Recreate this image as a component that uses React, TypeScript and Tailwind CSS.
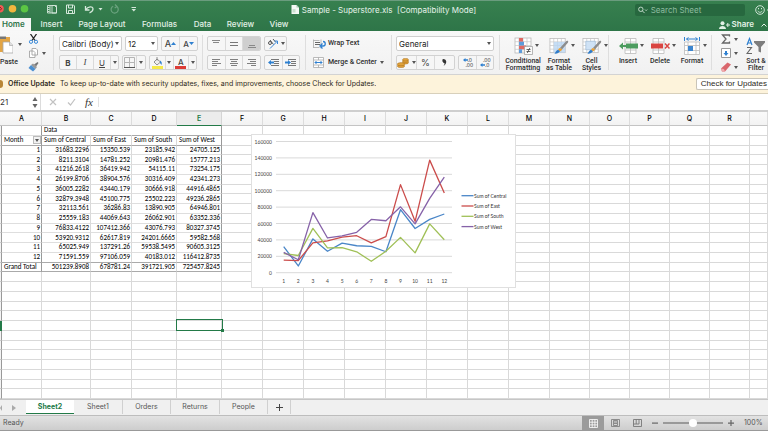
import React from 'react';

const months = [
  ['1', '31683.2296', '15350.539', '23185.942', '24705.125'],
  ['2', '8211.3104', '14781.252', '20981.476', '15777.213'],
  ['3', '41216.2618', '36419.942', '54115.11', '73254.175'],
  ['4', '26199.8706', '38904.576', '30316.409', '42341.273'],
  ['5', '36005.2282', '43440.179', '30666.918', '44916.4865'],
  ['6', '32879.3948', '45100.775', '25502.223', '49236.2865'],
  ['7', '32113.561', '36286.83', '13890.905', '64946.801'],
  ['8', '25559.183', '44069.643', '26062.901', '63352.336'],
  ['9', '76833.4122', '107412.366', '43076.793', '80327.3745'],
  ['10', '53920.9312', '62617.819', '24201.6665', '59582.568'],
  ['11', '65025.949', '137291.26', '59538.5495', '90605.3125'],
  ['12', '71591.559', '97106.059', '40183.012', '116412.8735'],
];
const sheet: string[][] = [
  ['', 'Data', '', '', ''],
  ['Month', 'Sum of Central', 'Sum of East', 'Sum of South', 'Sum of West'],
  ...months,
  ['Grand Total', '501239.8908', '678781.24', '391721.905', '725457.8245'],
];
const columns = 'ABCDEFGHIJKLMNOPQRS'.split('');
const columnWidths = [
  'w-[40px]', 'w-[49px]', 'w-[41px]', 'w-[45px]', 'w-[45px]', 'w-[41px]',
  'w-[41px]', 'w-[41px]', 'w-[41px]', 'w-[41px]', 'w-[41px]', 'w-[41px]', 'w-[41px]',
  'w-[40px]', 'w-[40px]', 'w-[40px]', 'w-[40px]', 'w-[40px]', '',
];
const series = [
  { name: 'Sum of Central', color: '#4a86c8' },
  { name: 'Sum of East', color: '#cb4c4b' },
  { name: 'Sum of South', color: '#a0c057' },
  { name: 'Sum of West', color: '#8662a8' },
];

function Caret() {
  return (
    <svg className="h-[3px] w-1 shrink-0" viewBox="0 0 4 3" aria-hidden="true">
      <path d="M0 0h4L2 3z" fill="#555" />
    </svg>
  );
}

function Separator() {
  return <div className="my-1 w-px shrink-0 bg-[#dedede]" />;
}

function Box({ children, className = '' }: { children: React.ReactNode; className?: string }) {
  return (
    <div className={`flex h-[15px] shrink-0 items-stretch divide-x divide-[#dadada] overflow-hidden rounded-[2px] border border-[#d2d2d2] bg-[#f6f6f6] ${className}`}>
      {children}
    </div>
  );
}

function Btn({ label, children, className = '' }: { label: string; children: React.ReactNode; className?: string }) {
  return (
    <button type="button" aria-label={label} className={`flex flex-1 items-center justify-center ${className}`}>
      {children}
    </button>
  );
}

function Picker({ label, value, className }: { label: string; value: string; className: string }) {
  return (
    <div className={`relative h-[15px] shrink-0 ${className}`}>
      <select aria-label={label} defaultValue={value} className="block h-[15px] w-full appearance-none rounded-[2px] border border-[#cfcfcf] bg-white pl-0.5 text-[8px] leading-[12px] text-[#222]">
        <option>{value}</option>
      </select>
      <span className="pointer-events-none absolute inset-y-0.5 right-0.5 flex w-1.5 items-center justify-center">
        <Caret />
      </span>
    </div>
  );
}

function Lines({ rows }: { rows: [number, number][] }) {
  return (
    <svg className="h-[9px] w-[10px]" viewBox="0 0 10 9" aria-hidden="true">
      {rows.map(([x, w], i) => (
        <rect key={i} x={x} y={i * 2 + 1} width={w} height="1" fill="#808080" />
      ))}
    </svg>
  );
}

function BigButton({ lines, children, className }: { lines: string[]; children: React.ReactNode; className: string }) {
  return (
    <button type="button" className={`flex shrink-0 flex-col items-center gap-[3px] pt-[5px] font-['Roboto',sans-serif] text-[7px] leading-[7px] font-medium text-[#2e2e2e] ${className}`}>
      <span className="flex h-[19px] items-center gap-0.5 pl-1.5">
        {children}
        <Caret />
      </span>
      <span className="flex flex-col whitespace-nowrap">
        {lines.map((l) => <span key={l}>{l}</span>)}
      </span>
    </button>
  );
}

function GridArt() {
  return (
    <g>
      <rect x="1" y="1" width="16" height="15" fill="#fff" stroke="#b9b9b9" strokeWidth=".8" />
      <path d="M1 4.7h16M1 8.5h16M1 12.3h16M5 1v15M9 1v15M13 1v15" stroke="#c4c4c4" strokeWidth=".7" />
    </g>
  );
}

function BrushArt() {
  return (
    <g>
      <path d="M19.5 3.5c.9.4.8 1.3.3 2l-6 7-2.300-1.500 6.200-6.800c.6-.7 1.200-1 1.800-.7z" fill="#8d8d8d" />
      <path d="M11.500 11l2.300 1.500c-.2 1-1.100 2-2.300 2.200l-2-1.500c.2-1 1-1.900 2-2.200z" fill="#e8a23b" />
      <path d="M9.500 13l2 1.600c-1.300 2.200-3.300 2.700-6 2.400 1.600-.8 1.700-3.300 4-4z" fill="#2f7cc9" />
    </g>
  );
}

function TitleBar() {
  return (
    <header className="shrink-0 border-t border-[#6a9c7e] bg-gradient-to-b from-[#37804f] to-[#2e7548] text-white">
      <div className="flex h-[17px] items-center">
        <svg className="h-[17px] w-[140px] shrink-0" viewBox="0 0 140 17" fill="none" stroke="#d5e8db" aria-hidden="true">
          <g stroke="none">
            <circle cx="0" cy="7.700" r="3.800" fill="#f25b55" />
            <circle cx="12.500" cy="7.700" r="3.800" fill="#f3b63e" />
            <circle cx="24.500" cy="7.700" r="3.800" fill="#5bc544" />
          </g>
          <path d="M0 6l1.600 1.700L0 9.500" stroke="#82201d" />
          <path d="M47.500 4.500h9v7.500h-9zM50 4.500V12M52 4.500h2.500l2 2V12H52zM48 6.500h1.500M48 8.500h1.500M48 10.500h1.500" strokeWidth=".9" />
          <path d="M66.500 4h7l1 1v7.500h-8zM68.500 4v3h4V4M68.500 12.500V9.500h4v3" strokeWidth="1" />
          <path d="M85.500 5v4h4M85.800 8.700c2-3.200 7.200-4 7.200-.7 0 1.700-1.500 3-3.500 3.800" strokeWidth="1.300" />
          <path d="M98.500 7h4l-2 2.600z" fill="#d5e8db" stroke="none" />
          <path d="M113.200 5.200a3.600 3.600 0 1 0 3.600.4M115 3.500l2 2-2.300 1.600" stroke="#6aa27e" strokeWidth="1.200" />
          <path d="M131.500 6h4.500v1h-4.500zM131.500 8h4.500l-2.200 2.600z" fill="#d5e8db" stroke="none" />
        </svg>
        <div className="flex flex-1 items-center justify-center gap-[3px] pr-2 text-[8px] leading-[10px] whitespace-pre text-[#e6f3ea]">
          <svg className="h-[9px] w-[8px]" viewBox="0 0 8 9" aria-hidden="true">
            <path d="M.5 0h5L8 2.500V9H.5z" fill="#f5f8f5" />
            <path d="M5.500 0L8 2.500H5.500z" fill="#a7c9b3" />
            <path d="M1.500 4h3v3.500h-3z" fill="#c8dfcf" />
          </svg>
          <span>{'Sample - Superstore.xls  [Compatibility Mode]'}</span>
        </div>
        <label className="flex h-[12px] w-[110px] shrink-0 items-center gap-[3px] rounded-[2px] bg-[#27683f] pl-[3px]">
          <svg className="h-[8px] w-[11px]" viewBox="0 0 11 8" fill="none" stroke="#cfe4d6" aria-hidden="true">
            <circle cx="3.200" cy="3.200" r="2.500" />
            <path d="M5 5l2.500 2.500M8 3.500l1.200 1.200 1.200-1.200" />
          </svg>
          <input aria-label="Search Sheet" placeholder="Search Sheet" className="w-full min-w-0 bg-transparent text-[8px] leading-[10px] placeholder:text-[#8fbda0]" />
        </label>
        <button type="button" aria-label="Feedback" className="ml-[10px] w-[13px] shrink-0">
          <svg className="h-[10px] w-[13px]" viewBox="0 0 13 10" fill="none" stroke="#cfe4d6" aria-hidden="true">
            <circle cx="5" cy="5" r="4.300" />
            <path d="M2.800 5.800c.8 2 3.600 2 4.400 0M3.500 3v1.300M6.500 3v1.300M12 5h1" />
          </svg>
        </button>
      </div>
      <nav className="flex h-[13px] items-stretch text-[8px] leading-[13px] font-medium text-[#e2f0e6]">
        <a href="#home" className="w-[31px] bg-[#f7f7f7] pl-0.5 font-semibold text-[#2f7549]">Home</a>
        <a href="#insert" className="w-[41px] text-center">Insert</a>
        <a href="#layout" className="w-[60px] text-center">Page Layout</a>
        <a href="#formulas" className="w-[55px] text-center">Formulas</a>
        <a href="#data" className="w-[31px] text-center">Data</a>
        <a href="#review" className="w-[45px] text-center">Review</a>
        <a href="#view" className="w-[32px] text-center">View</a>
        <button type="button" className="ml-auto flex items-center gap-0.5 font-semibold">
          <svg className="h-[8px] w-[11px]" viewBox="0 0 11 8" fill="#e2f0e6" aria-hidden="true">
            <circle cx="3.500" cy="2.200" r="2" />
            <path d="M0 8c0-4 7-4 7 0zM8.300 2h1v1.500H11v1H9.300V6h-1V4.500H7v-1h1.300z" />
          </svg>
          Share
        </button>
        <button type="button" aria-label="Collapse ribbon" className="ml-[7px] w-[7px]">
          <svg className="h-[4px] w-[6px]" viewBox="0 0 6 4" fill="none" stroke="#e2f0e6" aria-hidden="true"><path d="M.5 3.500L3 1l2.500 2.500" /></svg>
        </button>
      </nav>
    </header>
  );
}

function Ribbon() {
  return (
    <div className="flex h-[44px] shrink-0 overflow-hidden border-b border-[#d3d3d3] bg-gradient-to-b from-[#f8f8f8] to-[#f1f1f1]">
      <div className="flex w-[53px] shrink-0">
        <button type="button" className="flex w-[28px] shrink-0 flex-col items-start gap-[3px] pt-[3px] font-['Roboto',sans-serif] text-[7px] leading-[8px] font-medium text-[#2e2e2e]">
          <span className="flex h-[21px] items-center gap-[5px]">
            <svg className="h-[19px] w-[13px]" viewBox="0 0 13 19" aria-hidden="true">
              <path d="M0 2h10v15H0z" fill="#e3a545" />
              <path d="M0 1.500h6V4H0z" fill="#777" />
              <path d="M3 7h6.500L13 10.500V18H3z" fill="#fff" stroke="#aaa" strokeWidth=".8" />
              <path d="M9.500 7v3.500H13" fill="#ddd" stroke="#aaa" strokeWidth=".7" />
            </svg>
            <Caret />
          </span>
          Paste
        </button>
        <div className="flex flex-col gap-1 pt-[3px]">
          <button type="button" aria-label="Cut" className="flex">
            <svg className="h-[10px] w-[11px]" viewBox="0 0 11 10" fill="none" aria-hidden="true">
              <path d="M2.500 0l4.500 6.500M8.500 0L4 6.500" stroke="#222" strokeWidth="1.300" />
              <circle cx="3" cy="7.800" r="1.600" stroke="#3a8bdb" />
              <circle cx="8" cy="7.800" r="1.600" stroke="#3a8bdb" />
            </svg>
          </button>
          <button type="button" aria-label="Copy" className="flex items-center gap-[3px]">
            <svg className="h-[10px] w-[11px]" viewBox="0 0 11 10" fill="#fff" stroke="#9a9a9a" strokeWidth=".8" aria-hidden="true">
              <path d="M4 .5h4l1.500 1.500v5H4zM1.500 3h4L7 4.500v5H1.500z" />
            </svg>
            <Caret />
          </button>
          <button type="button" aria-label="Format Painter" className="flex">
            <svg className="h-[10px] w-[11px]" viewBox="0 0 11 10" aria-hidden="true">
              <path d="M10.500 1L9.500 0 6 2.500l2 2z" fill="#777" />
              <path d="M3 3l2-1.500L9 5 7.500 7z" fill="#999" />
              <path d="M3 3L.5 6 5 9.500 7.500 7z" fill="#4b8fd0" />
            </svg>
          </button>
        </div>
      </div>
      <Separator />
      <div className="flex w-[148px] shrink-0 flex-col gap-1 pt-[5px] pl-[5px]">
        <div className="flex gap-[3px]">
          <Picker label="Font" value="Calibri (Body)" className="w-[63px]" />
          <Picker label="Font size" value="12" className="w-[33px]" />
          <Box className="w-[37px] text-[9px] font-medium text-[#444]">
            <Btn label="Increase font size">A<svg className="h-[3px] w-[5px]" viewBox="0 0 5 3"><path d="M0 3h5L2.500 0z" fill="#2f80d0" /></svg></Btn>
            <Btn label="Decrease font size" className="text-[8px]">A<svg className="h-[3px] w-[5px]" viewBox="0 0 5 3"><path d="M0 0h5L2.500 3z" fill="#2f80d0" /></svg></Btn>
          </Box>
        </div>
        <div className="flex gap-[3px] text-[8px] text-[#444]">
          <Box className="w-[60px]">
            <Btn label="Bold" className="font-bold">B</Btn>
            <Btn label="Italic" className="font-['Liberation_Serif',serif] text-[9px] italic">I</Btn>
            <Btn label="Underline" className="underline">U</Btn>
            <button type="button" aria-label="Underline options" className="flex w-[7px] items-center justify-center"><Caret /></button>
          </Box>
          <Box className="w-[24px]">
            <Btn label="Borders">
              <svg className="h-[11px] w-[11px]" viewBox="0 0 11 11" fill="none" stroke="#b5b5b5"><path d="M.5.500h10v10H.5zM5.500.500v10M.5 5.500h10" /><path d="M0 10.500h11" stroke="#555" /></svg>
            </Btn>
            <button type="button" aria-label="Border options" className="flex w-[8px] items-center justify-center"><Caret /></button>
          </Box>
          <Box className="w-[48px]">
            <Btn label="Fill color">
              <svg className="h-[12px] w-[11px]" viewBox="0 0 11 12">
                <path d="M2 5l3-3 3.500 3-3.500 3z" fill="#eee" stroke="#777" strokeWidth=".8" />
                <path d="M5 0v3.500" stroke="#777" strokeWidth=".8" />
                <path d="M8 3.500c2 1 2 3 1.500 4.500L8 6z" fill="#3182ce" />
                <path d="M0 9h11v3H0z" fill="#f5e94a" />
              </svg>
            </Btn>
            <button type="button" aria-label="Fill options" className="flex w-[8px] items-center justify-center"><Caret /></button>
            <Btn label="Font color" className="flex-col font-medium">
              <span className="h-[9px] leading-[10px]">A</span>
              <span className="h-[3px] w-[11px] bg-[#dc3c37]" />
            </Btn>
            <button type="button" aria-label="Font color options" className="flex w-[7px] items-center justify-center"><Caret /></button>
          </Box>
        </div>
      </div>
      <Separator />
      <div className="flex w-[102px] shrink-0 flex-col gap-1 pt-[5px] pl-1">
        <div className="flex gap-[3px]">
          <Box className="w-[54px]">
            <Btn label="Top align"><svg className="h-[10px] w-[8px]" viewBox="0 0 8 10" fill="#888"><path d="M0 1h8v1H0zM1 3h6v1H1z" /></svg></Btn>
            <Btn label="Middle align"><svg className="h-[10px] w-[8px]" viewBox="0 0 8 10" fill="#777"><path d="M0 3h8v1H0zM0 6h8v1H0z" /></svg></Btn>
            <Btn label="Bottom align" className="bg-[#cfcfcf]"><svg className="h-[10px] w-[8px]" viewBox="0 0 8 10" fill="#888"><path d="M1 6h6v1H1zM0 8h8v1H0z" /></svg></Btn>
          </Box>
          <Box className="w-[23px]">
            <Btn label="Orientation" className="gap-0.5">
              <svg className="h-[11px] w-[12px]" viewBox="0 0 12 11" fill="none" stroke="#555">
                <circle cx="3" cy="5" r="1.500" /><path d="M3 2l3.500 4.500M6 1l2.500 3" />
                <path d="M3 10.500l7-7M10.500 6V3H7.500" stroke="#3a88d8" />
              </svg>
              <Caret />
            </Btn>
          </Box>
        </div>
        <div className="flex gap-[3px]">
          <Box className="w-[54px]">
            <Btn label="Align left"><Lines rows={[[1, 8], [1, 6], [1, 9], [1, 5]]} /></Btn>
            <Btn label="Center"><Lines rows={[[1, 8], [2, 6], [1, 8], [2, 6]]} /></Btn>
            <Btn label="Align right"><Lines rows={[[1, 8], [3, 6], [0, 9], [4, 5]]} /></Btn>
          </Box>
          <Box className="w-[36px]">
            <Btn label="Decrease indent">
              <svg className="h-[9px] w-[11px]" viewBox="0 0 11 9"><path d="M3 1h8v1H3zM6 3h5v1H6zM6 5h5v1H6zM3 7h8v1H3z" fill="#777" /><path d="M0 4.500L3 2v1.500h3v2H3V7z" fill="#2f80d0" /></svg>
            </Btn>
            <Btn label="Increase indent">
              <svg className="h-[9px] w-[11px]" viewBox="0 0 11 9"><path d="M3 1h8v1H3zM6 3h5v1H6zM6 5h5v1H6zM3 7h8v1H3z" fill="#777" /><path d="M6 4.500L3 2v1.500H0v2h3V7z" fill="#2f80d0" /></svg>
            </Btn>
          </Box>
        </div>
      </div>
      <Separator />
      <div className="flex w-[85px] shrink-0 flex-col gap-1 pt-[5px] pl-[7px] font-['Roboto',sans-serif] text-[7px] font-medium whitespace-nowrap text-[#2e2e2e]">
        <button type="button" className="flex h-[15px] items-center gap-0.5">
          <svg className="h-[10px] w-[13px]" viewBox="0 0 13 10" fill="none" aria-hidden="true">
            <path d="M.5.500v8.500M8 .500v9M.5 1.500h6M.5 8.500h6" stroke="#aaa" strokeWidth=".8" />
            <path d="M2 3.500h5M2 5.500h5" stroke="#666" />
            <path d="M10 2.500c3 0 3 4.500 0 4.500H8M9.500 4.500L7 7l2.500 2.500" stroke="#2f80d0" strokeWidth="1.300" />
          </svg>
          Wrap Text
        </button>
        <button type="button" className="flex h-[15px] items-center gap-[3px]">
          <svg className="h-[11px] w-[12px]" viewBox="0 0 12 11" fill="#fff" aria-hidden="true">
            <path d="M.5.500h10v10H.5zM.5 3h10M.5 8h10M5.500.500V3M5.500 8v2.500" stroke="#aaa" strokeWidth=".8" />
            <path d="M2 5.500h7M3.500 4L2 5.500 3.500 7M7.500 4L9 5.500 7.500 7" stroke="#2f80d0" fill="none" />
          </svg>
          Merge &amp; Center
          <Caret />
        </button>
      </div>
      <Separator />
      <div className="flex w-[107px] shrink-0 flex-col gap-1 pt-[5px] pl-1">
        <Picker label="Number format" value="General" className="w-[98px]" />
        <div className="flex gap-[3px]">
          <Box className="w-[59px] text-[9px] text-[#444]">
            <Btn label="Currency" className="gap-[3px]">
              <svg className="h-[10px] w-[12px]" viewBox="0 0 12 10" fill="#e1a33b" stroke="#a66d1d" strokeWidth=".5"><ellipse cx="8.500" cy="4.500" rx="3" ry="1.500" /><ellipse cx="8.500" cy="3" rx="3" ry="1.500" /><ellipse cx="8.500" cy="1.700" rx="3" ry="1.300" /><ellipse cx="4" cy="8" rx="3.700" ry="1.600" /><ellipse cx="4" cy="6.200" rx="3.700" ry="1.600" /></svg>
              <Caret />
            </Btn>
            <button type="button" className="w-[18px]">%</button>
            <Btn label="Comma style"><svg className="h-[7px] w-[5px]" viewBox="0 0 5 7"><path d="M1 0c4 0 4.500 4.500.5 7 1-1.500 1.200-2.500.8-3C0 4 0 .500 1 0z" fill="#333" /></svg></Btn>
          </Box>
          <Box className="w-[36px] text-[5px] leading-[5px] text-[#333]">
            <Btn label="Increase decimal" className="flex-col">
              <span className="flex items-center"><svg className="h-[4px] w-[5px]" viewBox="0 0 5 4"><path d="M0 2l2.500-2v1.200H5v1.600H2.500V4z" fill="#2f80d0" /></svg>.0</span>
              <span className="pl-1">.00</span>
            </Btn>
            <Btn label="Decrease decimal" className="flex-col">
              <span className="pl-1">.00</span>
              <span className="flex items-center"><svg className="h-[4px] w-[5px]" viewBox="0 0 5 4"><path d="M0 2l2.500-2v1.200H5v1.600H2.500V4z" fill="#2f80d0" /></svg>.0</span>
            </Btn>
          </Box>
        </div>
      </div>
      <Separator />
      <div className="flex w-[108px] shrink-0 gap-[1px] pl-1">
        <BigButton lines={['Conditional', 'Formatting']} className="w-[38px]">
          <svg className="h-[18px] w-[19px]" viewBox="0 0 19 18">
            <GridArt />
            <path d="M5 1h4v3.700H5zM5 8.500h7v3.800H5z" fill="#df6962" /><path d="M5 4.700h5v3.800H5zM5 12.300h3V16H5z" fill="#5c9bdb" />
            <path d="M10.500 9.500h8v8h-8z" fill="#fafafa" stroke="#999" strokeWidth=".7" />
            <path d="M12.500 12.500h4M12.500 14.500h4M15.800 11l-2.500 5" stroke="#444" strokeWidth=".8" />
          </svg>
        </BigButton>
        <BigButton lines={['Format', 'as Table']} className="w-[32px]">
          <svg className="h-[18px] w-[20px]" viewBox="0 0 21 18"><GridArt /><path d="M5 4.700h12V16H5z" fill="#b9d6f2" opacity=".8" /><BrushArt /></svg>
        </BigButton>
        <BigButton lines={['Cell', 'Styles']} className="w-[31px]">
          <svg className="h-[18px] w-[20px]" viewBox="0 0 21 18"><GridArt /><path d="M4 4h10v9H4z" fill="#cfe2f5" stroke="#9bb9d6" strokeWidth=".7" /><BrushArt /></svg>
        </BigButton>
      </div>
      <Separator />
      <div className="flex w-[102px] shrink-0 pl-[3px]">
        <BigButton lines={['Insert']} className="w-[32px]">
          <svg className="h-[18px] w-[19px]" viewBox="0 0 19 18"><path d="M6 1.500h11v15H6zM6 5h11M6 13h11M11.500 1.500v15" fill="#fff" stroke="#bbb" strokeWidth=".8" /><path d="M0 9l4-3.500V8h3V6.500h12v5H7V10H4v2.500z" fill="#4c9c5f" /></svg>
        </BigButton>
        <BigButton lines={['Delete']} className="w-[32px]">
          <svg className="h-[18px] w-[19px]" viewBox="0 0 19 18"><path d="M2 1.500h11v15H2zM2 5h11M2 13h11M7.500 1.500v15" fill="#fff" stroke="#bbb" strokeWidth=".8" /><path d="M0 6.500h12v5H0z" fill="#d94541" /><path d="M14 6.500l4.500 5M18.500 6.500l-4.500 5" stroke="#d94541" strokeWidth="1.500" /></svg>
        </BigButton>
        <BigButton lines={['Format']} className="w-[32px]">
          <svg className="h-[18px] w-[18px]" viewBox="0 0 18 18"><path d="M1.500 5h15v12.500h-15zM1.500 8.500h15M1.500 13.500h15M5 5v12.500M13 5v12.500" fill="#fff" stroke="#bbb" strokeWidth=".8" /><path d="M5 9h5v5H5z" fill="#3b85cf" /><path d="M1.500 0v4M16.500 0v4M3.500 2h11M5.500.500L3.500 2l2 1.500M12.500.500l2 1.500-2 1.500" fill="none" stroke="#2f80d0" /></svg>
        </BigButton>
      </div>
      <Separator />
      <div className="flex min-w-0 flex-1 overflow-hidden pl-[9px]">
        <div className="flex shrink-0 flex-col gap-1 pt-[3px]">
          <button type="button" aria-label="AutoSum" className="flex items-center gap-[3px]"><svg className="h-[10px] w-[10px]" viewBox="0 0 10 10" fill="none" stroke="#666" strokeWidth="1.300"><path d="M8.500 2.500V1H1.500L5 5 1.500 9h7V7.500" /></svg><Caret /></button>
          <button type="button" aria-label="Fill" className="flex items-center gap-[3px]"><svg className="h-[10px] w-[10px]" viewBox="0 0 10 10"><path d="M.5.500h9v9h-9z" fill="#fff" stroke="#999" /><path d="M4 3h2v2h1.500L5 8 2.500 5H4z" fill="#2f80d0" /></svg><Caret /></button>
          <button type="button" aria-label="Clear" className="flex items-center gap-[3px]"><svg className="h-[10px] w-[10px]" viewBox="0 0 10 10"><path d="M0 6.500L6.500.500l3.500 2L4 9.500H1z" fill="#d9676d" /><path d="M0 6.500l3 .5 1 2.500H1z" fill="#f0a9ac" /></svg><Caret /></button>
        </div>
        <BigButton lines={['Sort &', 'Filter']} className="ml-1.5 w-[24px]">
          <svg className="h-[18px] w-[20px] shrink-0" viewBox="0 0 20 18" fill="none"><path d="M1 8l2.500-6.500L6 8M2 6h3" stroke="#2f80d0" strokeWidth="1.200" /><path d="M1 10.500h4.500L1 16.500h5" stroke="#666" strokeWidth="1.100" /><path d="M8 4h11v1.500L15 10v5.500l-2.500-1V10L8 5.500z" fill="#7d7d7d" /></svg>
        </BigButton>
      </div>
    </div>
  );
}

function UpdateBar() {
  return (
    <div className="flex h-[19px] shrink-0 items-center border-b border-[#d8d0bb] bg-[#fdf3db] text-[7px] leading-[10px] text-[#2d2a22]">
      <span className="h-[8px] w-[3px] shrink-0 rounded-r-full bg-[#b98637]" />
      <strong className="ml-[5px] w-[52px] shrink-0 whitespace-nowrap font-semibold">Office Update</strong>
      <span className="truncate">To keep up-to-date with security updates, fixes, and improvements, choose Check for Updates.</span>
      <button type="button" className="ml-auto h-[12px] w-[72px] shrink-0 overflow-hidden rounded-l-[2px] border border-r-0 border-[#c9c4b8] bg-white pr-px text-right font-['Liberation_Sans',Arial,sans-serif] text-[8px] whitespace-nowrap">
        Check for Updates
      </button>
    </div>
  );
}

function FormulaBar() {
  return (
    <div className="flex h-[18px] shrink-0 items-center border-b-2 border-[#cfcfcf] bg-white text-[#333]">
      <input aria-label="Name box" defaultValue="21" className="w-[32px] shrink-0 text-[8px] leading-[10px]" />
      <svg className="h-[11px] w-[6px]" viewBox="0 0 6 11" fill="#666" aria-hidden="true"><path d="M.5 4h5L3 0zM.5 7h5L3 11z" /></svg>
      <span className="ml-0.5 h-full w-px bg-[#dcdcdc]" />
      <button type="button" aria-label="Cancel" className="ml-2 flex w-[10px]"><svg className="h-[8px] w-[8px]" viewBox="0 0 8 8" fill="none" stroke="#c2c2c2" strokeWidth="1.200"><path d="M1 1l6 6M7 1L1 7" /></svg></button>
      <button type="button" aria-label="Enter" className="ml-2 flex w-[10px]"><svg className="h-[8px] w-[9px]" viewBox="0 0 9 8" fill="none" stroke="#c2c2c2" strokeWidth="1.200"><path d="M1 4.500L3.500 7 8 1" /></svg></button>
      <button type="button" aria-label="Insert function" className="ml-2 w-[12px] text-left font-['Liberation_Serif',serif] text-[11px] leading-[12px] italic">fx</button>
      <span className="ml-[1px] h-[10px] w-px bg-[#e2e2e2]" />
      <input aria-label="Formula" className="min-w-0 flex-1" />
    </div>
  );
}

function Chart() {
  const px = (i: number) => 31.7 + i * 14.6;
  const py = (v: number) => 137.7 - (v * 131.2) / 160000;
  return (
    <svg className="absolute top-[22px] left-[251px] h-[154px] w-[265px] border border-[#e0e0e0] bg-white font-['Lato',sans-serif]" viewBox="0 0 263 152" role="img" aria-label="Monthly sales by region">
      {Array.from({ length: 9 }, (_, i) => (
        <g key={i}>
          <path d={`M24 ${py(i * 20000)}H200`} stroke="#d9d9d9" strokeWidth="1" />
          <text x="20" y={py(i * 20000) + 2} textAnchor="end" fontSize="5" fill="#444">{i * 20000}</text>
        </g>
      ))}
      {months.map((m, i) => (
        <text key={m[0]} x={px(i)} y="148" textAnchor="middle" fontSize="5" fill="#444">{m[0]}</text>
      ))}
      {series.map((s, k) => (
        <g key={s.name}>
          <polyline points={months.map((m, i) => `${px(i)},${py(Number(m[k + 1]))}`).join(' ')} fill="none" stroke={s.color} strokeWidth="1.300" strokeLinejoin="round" />
          <path d={`M209.500 ${60.7 + k * 10.3}h12`} stroke={s.color} strokeWidth="1.300" />
          <text x="222" y={62.7 + k * 10.3} fontSize="5" fill="#333">{s.name}</text>
        </g>
      ))}
    </svg>
  );
}

function pivotBorder(r: number, c: number) {
  if (r > 14 || c > 4) return 'border-[#d9d9d9]';
  const right = c === 0 || c === 4 ? 'border-r-[#999]' : r === 0 ? 'border-r-white' : 'border-r-[#d9d9d9]';
  const bottom = (r === 0 && c > 0) || r === 1 || r >= 13 ? 'border-b-[#aaa]' : 'border-b-[#dedede]';
  return `${right} ${bottom}`;
}

function Grid() {
  return (
    <main className="relative min-h-0 flex-1 overflow-hidden bg-white">
      <table className="h-full w-full table-fixed border-separate border-spacing-0 font-['Carlito','Lato',sans-serif] text-[7px] leading-[8px] text-black">
        <colgroup>
          <col className="w-[2px]" />
          {columns.map((c, i) => <col key={c} className={columnWidths[i]} />)}
        </colgroup>
        <thead>
          <tr className="h-[14px] bg-gradient-to-b from-[#fafafa] to-[#f2f2f2] font-['Inter',sans-serif]">
            <th className="border-b border-[#c4c4c4] p-0" />
            {columns.map((c) => (
              <th key={c} scope="col" className={c === 'E' ? 'border-r border-b border-r-[#d5d5d5] border-b-[#237a48] bg-[#ececec] p-0 font-semibold text-[#237a48]' : 'border-r border-b border-r-[#dcdcdc] border-b-[#c4c4c4] p-0 font-medium'}>
                {c === 'S' ? '' : c}
              </th>
            ))}
          </tr>
        </thead>
        <tbody>
          {Array.from({ length: 28 }, (_, r) => (
            <tr key={r}>
              <th className={r === 20 ? 'bg-[#237a48] p-0' : 'border-r border-b border-r-[#999] border-b-[#ccc] bg-[#f4f4f4] p-0'} />
              {columns.map((c, i) => {
                const text = sheet[r]?.[i] ?? '';
                const numeric = /^\d/.test(text);
                return (
                  <td key={c} className={`border-r border-b p-0 ${pivotBorder(r, i)} ${numeric ? 'pr-px text-right' : 'pl-0.5'}`}>
                    {r === 20 && c === 'E' ? (
                      <div className="relative">
                        <span className="absolute -top-[6px] -left-[3px] h-[12px] w-[47px] border-[1.5px] border-[#237a48]" />
                        <span className="absolute top-1 left-[42px] h-[3px] w-[3px] bg-[#237a48]" />
                      </div>
                    ) : text === 'Month' ? (
                      <div className="flex h-[8px] items-center justify-between">
                        Month
                        <button type="button" aria-label="Filter months" className="flex h-[8px] w-[8px] items-center justify-center border border-[#bbb] bg-[#f2f2f2]"><Caret /></button>
                      </div>
                    ) : (
                      <div className="h-[8px] whitespace-nowrap">{text}</div>
                    )}
                  </td>
                );
              })}
            </tr>
          ))}
        </tbody>
      </table>
      <Chart />
    </main>
  );
}

function SheetTabs() {
  const tab = 'h-[14px] border-r border-[#d0d0d0] text-center';
  return (
    <nav className="flex h-[16px] shrink-0 border-t border-[#c6c6c6] bg-[#f0f0f0] text-[7px] leading-[13px] text-[#555]">
      <div className="flex w-[26px] shrink-0 items-center justify-between pr-[10px]">
        <button type="button" aria-label="Previous sheet"><svg className="h-[6px] w-[2px]" viewBox="0 0 2 6"><path d="M2 0v6L0 3z" fill="#aaa" /></svg></button>
        <button type="button" aria-label="Next sheet"><svg className="h-[6px] w-[4px]" viewBox="0 0 4 6"><path d="M0 0v6l4-3z" fill="#aaa" /></svg></button>
      </div>
      <a href="#sheet2" className="h-[14px] w-[48px] border-b border-[#237a48] bg-white text-center font-bold text-[#237a48]">Sheet2</a>
      <a href="#sheet1" className={`${tab} w-[49px]`}>Sheet1</a>
      <a href="#orders" className={`${tab} w-[48px]`}>Orders</a>
      <a href="#returns" className={`${tab} w-[49px]`}>Returns</a>
      <a href="#people" className={`${tab} w-[48px]`}>People</a>
      <button type="button" aria-label="Add sheet" className={`${tab} flex w-[23px] items-center justify-center`}>
        <svg className="h-[7px] w-[7px]" viewBox="0 0 7 7" stroke="#444" strokeWidth="1"><path d="M3.500 0v7M0 3.500h7" /></svg>
      </button>
    </nav>
  );
}

function StatusBar() {
  return (
    <footer className="flex h-[16px] shrink-0 items-center border-t border-b border-t-[#bdbdbd] border-b-[#999] bg-gradient-to-b from-[#e2e2e2] to-[#cdcdcd] text-[7px] leading-[10px] text-[#555]">
      <span className="pl-[3px]">Ready</span>
      <button type="button" aria-label="Normal view" className="ml-auto flex h-full w-[22px] items-center justify-center bg-[#9b9b9b]">
        <svg className="h-[9px] w-[9px]" viewBox="0 0 9 9" fill="none" stroke="#fff" strokeWidth=".8"><path d="M.5.500h8v8h-8zM.5 3.200h8M.5 5.900h8M3.200.500v8M5.900.500v8" /></svg>
      </button>
      <button type="button" aria-label="Page layout view" className="flex w-[22px] justify-center">
        <svg className="h-[8px] w-[9px]" viewBox="0 0 9 8" fill="none" stroke="#777" strokeWidth=".8"><path d="M.5.500h8v7h-8zM2.500 1.500h4v5h-4zM3 3h3M3 4.500h3" /></svg>
      </button>
      <button type="button" aria-label="Page break view" className="flex w-[22px] justify-center">
        <svg className="h-[8px] w-[9px]" viewBox="0 0 9 8" fill="none" stroke="#777" strokeWidth=".9"><path d="M.5.500h8v7h-8zM.5 5h5.500V.500M3.200.500V5" /></svg>
      </button>
      <button type="button" aria-label="Zoom out" className="ml-1 flex"><svg className="h-[6px] w-[6px]" viewBox="0 0 6 6"><path d="M0 2.500h6v1.200H0z" fill="#666" /></svg></button>
      <input type="range" aria-label="Zoom" defaultValue="50" className="mx-[5px] h-[2px] w-[60px] appearance-none bg-[#999] [&::-webkit-slider-thumb]:h-[8px] [&::-webkit-slider-thumb]:w-[8px] [&::-webkit-slider-thumb]:appearance-none [&::-webkit-slider-thumb]:rounded-full [&::-webkit-slider-thumb]:bg-white" />
      <button type="button" aria-label="Zoom in" className="flex"><svg className="h-[6px] w-[6px]" viewBox="0 0 6 6"><path d="M0 2.500h6v1.200H0zM2.400 0h1.200v6H2.400z" fill="#666" /></svg></button>
      <span className="ml-[10px] w-[24px]">100%</span>
    </footer>
  );
}

export default function App() {
  return (
    <div className="flex h-screen flex-col overflow-hidden bg-white font-['Inter','Liberation_Sans',sans-serif]">
      <TitleBar />
      <Ribbon />
      <UpdateBar />
      <FormulaBar />
      <Grid />
      <SheetTabs />
      <StatusBar />
    </div>
  );
}
